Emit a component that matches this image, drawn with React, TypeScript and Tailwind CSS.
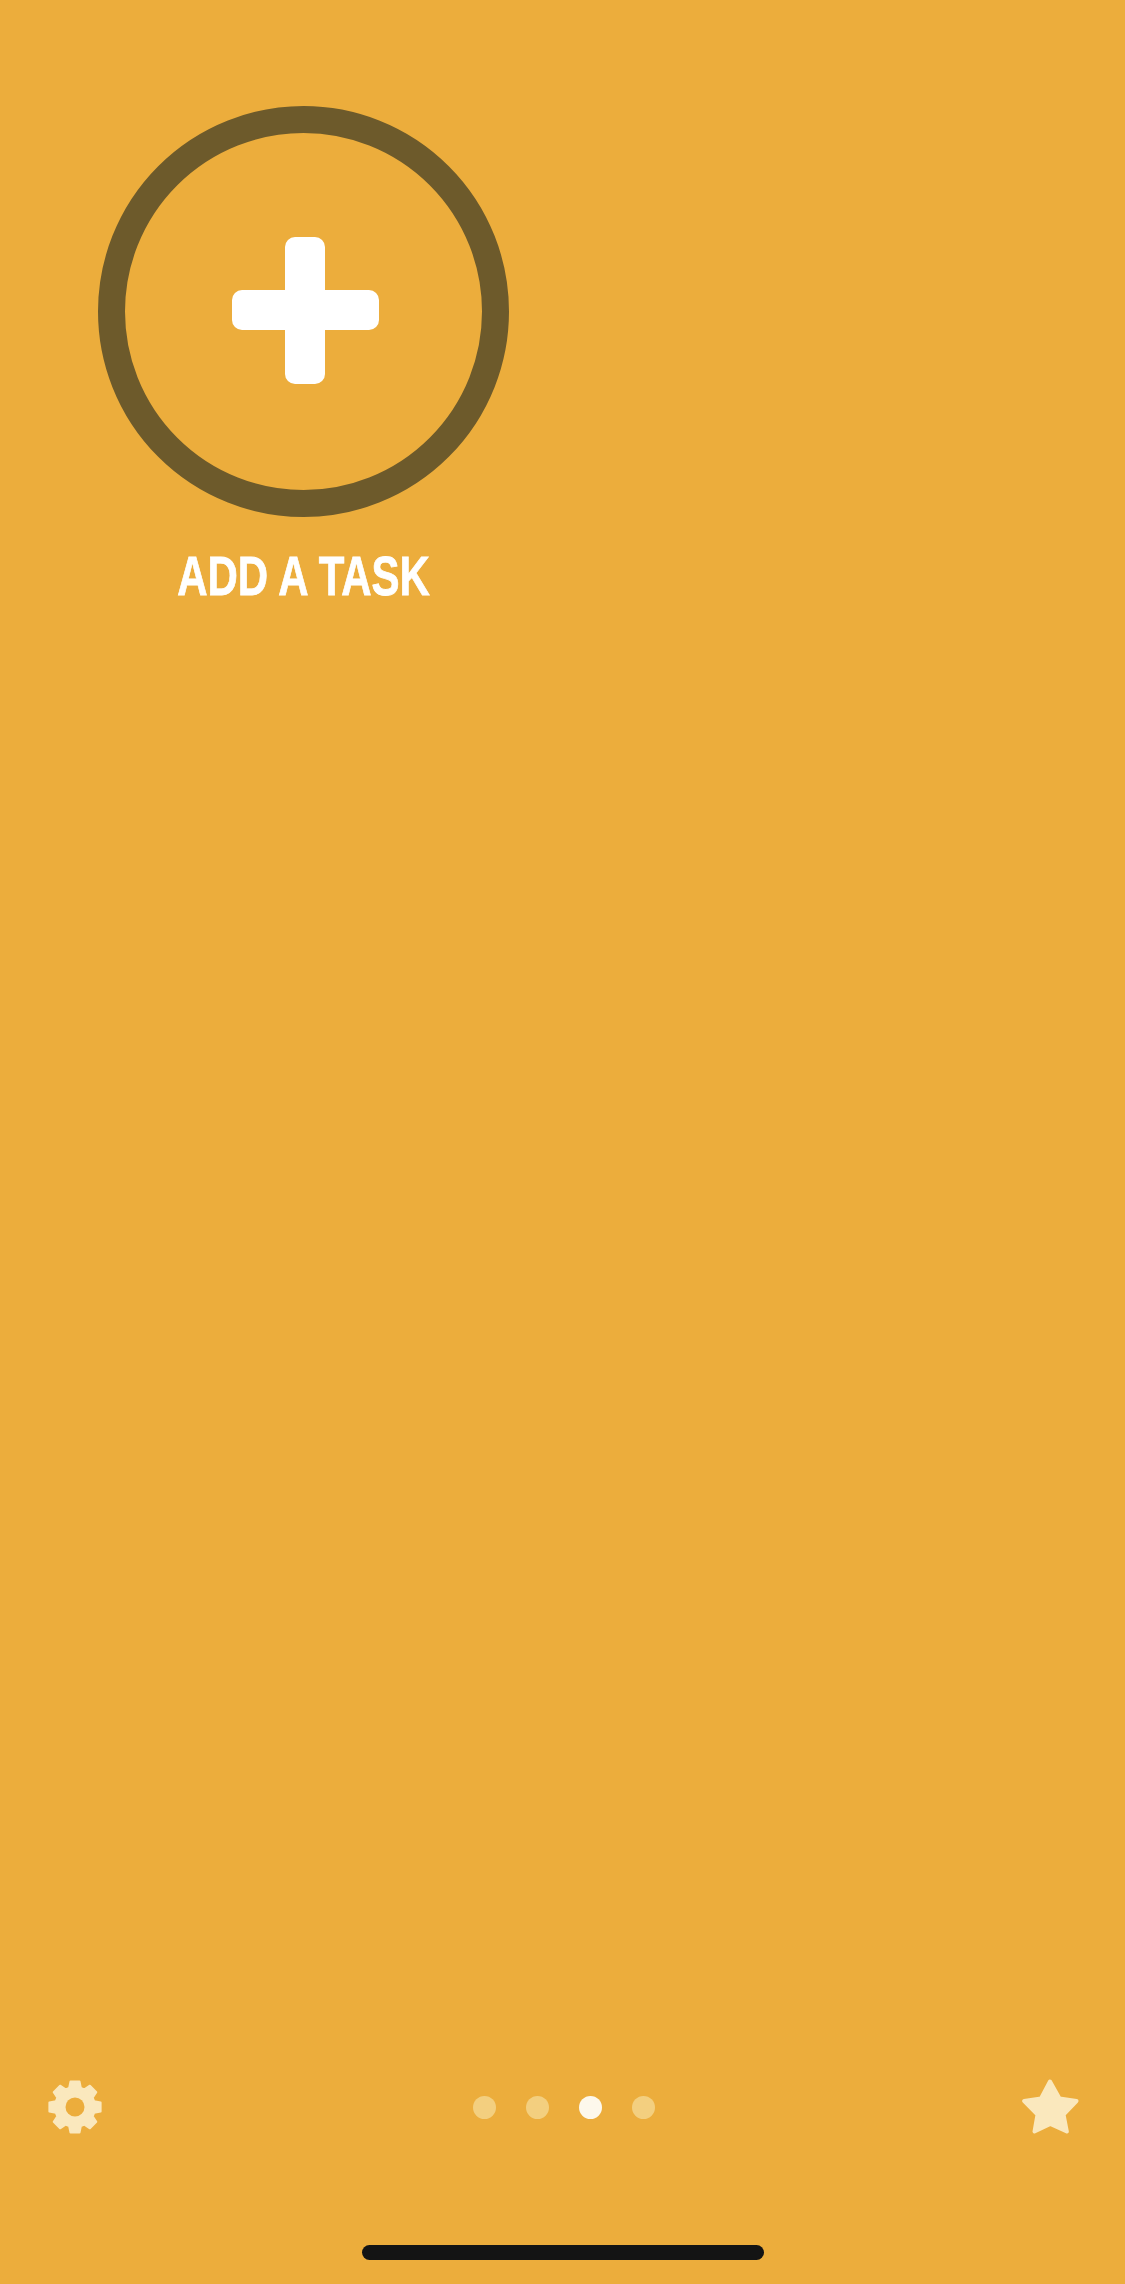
const gearPoints = () => {
  const pts: string[] = [];
  const at = (r: number, deg: number) => {
    const a = (deg * Math.PI) / 180;
    return `${(27 + r * Math.cos(a)).toFixed(2)},${(27 + r * Math.sin(a)).toFixed(2)}`;
  };
  for (let k = 0; k < 8; k++) {
    const a = k * 45 - 90;
    pts.push(at(20, a - 17), at(26, a - 10), at(26, a + 10), at(20, a + 17));
  }
  return pts.join(" ");
};

const GearIcon = () => (
  <svg width="54" height="54" viewBox="0 0 54 54" className="shrink-0">
    <polygon
      points={gearPoints()}
      fill="#fae8bd"
      stroke="#fae8bd"
      strokeWidth="2"
      strokeLinejoin="round"
    />
    <circle cx="27" cy="27" r="9.5" fill="#ecad3c" />
  </svg>
);

const StarIcon = () => (
  <svg width="57" height="56" viewBox="0 0 57 56" className="shrink-0">
    <polygon
      points="28,2.5 37.5,19.5 54.5,22 41.5,35.5 44.8,52.5 28.3,45 12.5,52.5 15.5,35.5 2.2,22 19,19.5"
      fill="#fae8bd"
      stroke="#fae8bd"
      strokeWidth="4"
      strokeLinejoin="round"
    />
  </svg>
);

const Dot = ({ active }: { active?: boolean }) => (
  <div
    className={`w-[23px] h-[23px] rounded-full ${active ? "bg-[#fdf8ec]" : "bg-[#f3cf7f]"}`}
  />
);

export default function App() {
  return (
    <div className="w-[1125px] h-[2284px] bg-[#ecad3c] flex flex-col overflow-hidden">
      <div className="grow pt-[106px] pl-[98px]">
        <div className="w-[411px] flex flex-col items-center">
          <div className="w-[411px] h-[411px] rounded-full border-[27px] border-[#6d5a2b] flex items-center justify-center">
            <div className="relative w-[147px] h-[147px] ml-[3px] mb-[3px]">
              <div className="absolute left-[53px] top-0 w-[40px] h-[147px] rounded-[10px] bg-white" />
              <div className="absolute left-0 top-[53px] w-[147px] h-[40px] rounded-[10px] bg-white" />
            </div>
          </div>
          <div className="mt-[31px] text-[56px] leading-none font-bold text-white whitespace-nowrap scale-x-[0.75] [-webkit-text-stroke:0.8px_white] font-['Liberation_Sans',sans-serif]">
            ADD A TASK
          </div>
        </div>
      </div>

      <div className="flex items-center justify-between pl-[48px] pr-[46px]">
        <GearIcon />
        <div className="flex items-center gap-[30px] ml-[3px]">
          <Dot />
          <Dot />
          <Dot active />
          <Dot />
        </div>
        <StarIcon />
      </div>

      <div className="flex justify-center pt-[110px] pb-[24px]">
        <div className="w-[402px] h-[15px] rounded-full bg-[#141414]" />
      </div>
    </div>
  );
}
